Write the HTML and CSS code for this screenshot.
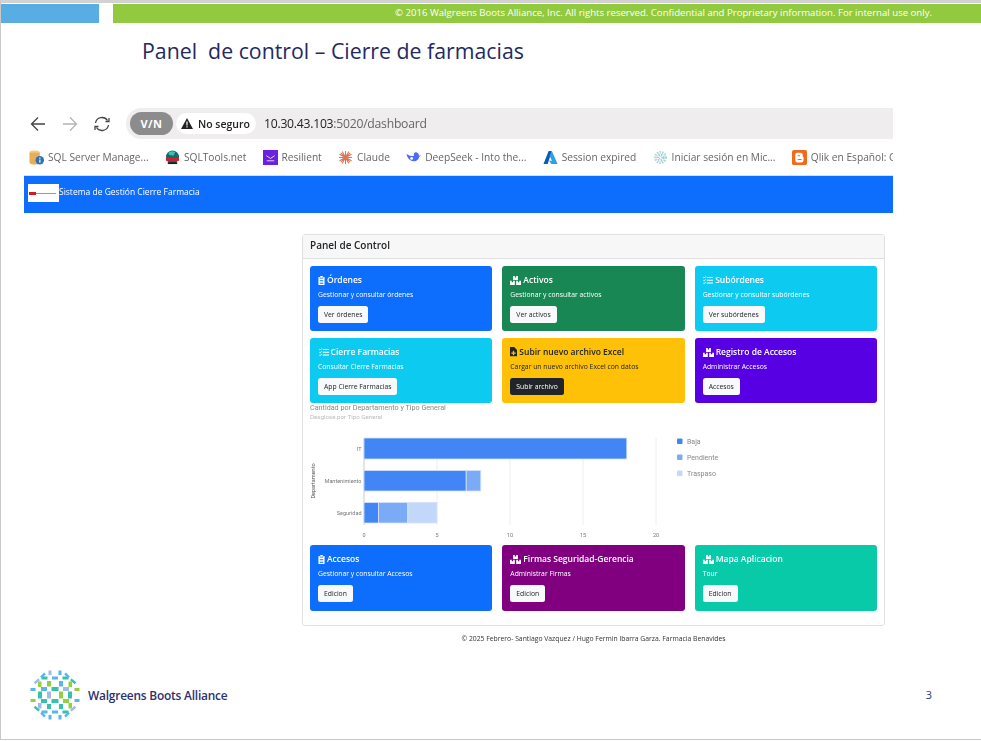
FILE: index.html

```html
<!DOCTYPE html>
<html lang="es">
<head>
  <meta charset="UTF-8">
  <title>Panel de control – Cierre de farmacias</title>
  <link rel="stylesheet" href="styles.css">
</head>
<body>
  <svg class="defs" width="0" height="0">
    <symbol id="i-clip" viewBox="0 0 16 16" preserveAspectRatio="none">
      <path fill-rule="evenodd" d="M5 0h6v3H5zM1 1.700h3V4.500h8V1.700h3V16H1zM4 7v1.300h8V7zM4 10v1.300h8V10zM4 13v1.300h8V13z"/>
    </symbol>
    <symbol id="i-boxes" viewBox="0 0 16 16" preserveAspectRatio="none">
      <path fill-rule="evenodd" d="M4.500 0H7v2.500h2V0h2.500v7h-7zM0 8.500h2.500V11h2V8.500H7V16H0zM9 8.500h2.500V11h2V8.500H16V16H9z"/>
    </symbol>
    <symbol id="i-list" viewBox="0 0 16 16" preserveAspectRatio="none">
      <path d="M6 2h10v1.800H6zM6 7.100h10v1.800H6zM6 12.200h10v1.800H6z"/>
      <path d="M.5 2.500l1.300 1.500L4.500.8M.5 7.800l1.300 1.500 2.700-3M.5 13l1.300 1.500 2.700-3" fill="none" stroke="currentColor" stroke-width="1.500"/>
    </symbol>
    <symbol id="i-file" viewBox="0 0 16 16" preserveAspectRatio="none">
      <path fill-rule="evenodd" d="M0 0h9.500L16 5v11H0zM6.500 6.500v2.700H3v2.200h3.500v2.700h3v-2.700H13V9.200H9.500V6.500z"/>
    </symbol>
  </svg>

  <div class="slide">
    <div class="topbar">
      <div class="topbar-blue"></div>
      <div class="topbar-green">© 2016 Walgreens Boots Alliance, Inc. All rights reserved. Confidential and Proprietary information. For internal use only.</div>
    </div>

    <h1 class="slide-title">Panel&nbsp; de control – Cierre de farmacias</h1>

    <div class="browser">
      <div class="address-row">
        <svg class="nav-icon" viewBox="0 0 16 16"><path d="M15 8H1.500M8 1.500L1.500 8 8 14.500" fill="none" stroke="#444" stroke-width="1.300"/></svg>
        <svg class="nav-icon" viewBox="0 0 16 16"><path d="M1 8h13.500M8 1.500L14.500 8 8 14.500" fill="none" stroke="#b4b4b4" stroke-width="1.300"/></svg>
        <svg class="nav-icon" viewBox="0 0 16 16"><path d="M1.500 7A6.600 6.600 0 0 1 13.500 4.500M14.500 9A6.600 6.600 0 0 1 2.500 11.500" fill="none" stroke="#444" stroke-width="1.300"/><path d="M15 2v3.500h-3.500M1 14v-3.500h3.500" fill="none" stroke="#444" stroke-width="1.300"/></svg>
        <div class="omnibox">
          <span class="vpn">V/N</span>
          <span class="not-secure">
            <svg width="12" height="11" viewBox="0 0 12 11"><path fill-rule="evenodd" d="M6 0l6 11H0zM5.400 3.500v4h1.200v-4zM5.400 8.300v1.200h1.200V8.300z" fill="#222"/></svg>
            No seguro
          </span>
          <span class="url">10.30.43.103<span class="url-rest">:5020/dashboard</span></span>
        </div>
      </div>

      <div class="bookmarks">
        <span class="bookmark">
          <svg viewBox="0 0 16 16"><ellipse cx="6" cy="3" rx="5.500" ry="2.500" fill="#f2c879"/><path d="M.5 3v10c0 1.500 2.500 2.500 5.500 2.500s5.500-1 5.500-2.500V3z" fill="#e9ad5a"/><circle cx="11.500" cy="11" r="4.500" fill="#2f6fb5"/><path d="M11 10h1.200v3.500H11zM11 8h1.200v1.200H11z" fill="#fff"/></svg>
          SQL Server Manage...
        </span>
        <span class="bookmark">
          <svg viewBox="0 0 16 16"><circle cx="8" cy="7.500" r="7" fill="#0f6b6e"/><path d="M4 2.500a7 7 0 0 1 7-.5l-2 4-5-1z" fill="#3ec0b0"/><rect x="1" y="8.500" width="14" height="3" fill="#d21f2b"/><rect x="3" y="13" width="10" height="2" fill="#123"/></svg>
          SQLTools.net
        </span>
        <span class="bookmark">
          <svg viewBox="0 0 16 16"><rect width="16" height="16" fill="#6a22dc"/><path d="M3.500 6l4.500 3 4.500-3M4 11.500h8" fill="none" stroke="#e6d9ff" stroke-width="1"/></svg>
          Resilient
        </span>
        <span class="bookmark">
          <svg viewBox="0 0 16 16"><path d="M8 1v14M1 8h14M3 3l10 10M13 3L3 13M4.500 1.500l7 13M11.500 1.500l-7 13M1.500 4.500l13 7M14.500 4.500l-13 7" stroke="#d97757" stroke-width="1.100"/></svg>
          Claude
        </span>
        <span class="bookmark">
          <svg viewBox="0 0 16 16"><path d="M.5 4c1 5 4 8 8 8 3 0 5-2 5.500-4.500L16 5.500c-1 0-1.500.2-2 .5-.5-2-1.500-3-3-3.500C9 2 8 4 8.500 6 6 7 3 6 .5 4z" fill="#4d6bfe"/><circle cx="6" cy="9" r="1.500" fill="#fff"/></svg>
          DeepSeek - Into the...
        </span>
        <span class="bookmark">
          <svg viewBox="0 0 16 16"><path d="M6 1h3.500L5 15H.5z" fill="#0a5cb5"/><path d="M9.500 1L15.500 15H9l-2.500-3.500h3L7 6z" fill="#2aa0ea"/></svg>
          Session expired
        </span>
        <span class="bookmark">
          <svg viewBox="0 0 16 16"><circle cx="8" cy="8" r="5.500" fill="none" stroke="#a9dccd" stroke-width="3" stroke-dasharray="1.500 1.200"/><circle cx="8" cy="8" r="2.500" fill="none" stroke="#a9c8ea" stroke-width="3" stroke-dasharray="1.200 1"/></svg>
          Iniciar sesión en Mic...
        </span>
        <span class="bookmark">
          <svg viewBox="0 0 16 16"><rect width="16" height="16" rx="2" fill="#f26a1b"/><path fill-rule="evenodd" d="M5.500 3h3.500a2.500 2.500 0 0 1 2.500 2.500V7c0 .5.500.8.800.8v3a2.500 2.500 0 0 1-2.500 2.500H5.500A2.200 2.200 0 0 1 3.500 11V5.200A2.200 2.200 0 0 1 5.500 3zM6 5.500v1.200h2.500V5.500zM6 9.500v1.200h4.200V9.500z" fill="#fff"/></svg>
          Qlik en Español: G
        </span>
      </div>

      <nav class="app-nav">
        <span class="app-logo"><span class="app-logo-mark"></span><span class="app-logo-line"></span></span>
        <span>Sistema de Gestión Cierre Farmacia</span>
      </nav>

      <div class="panel">
        <div class="panel-header">Panel de Control</div>
        <div class="panel-body">
          <div class="card-grid">
            <div class="card bg-blue">
              <h5><svg class="card-icon icon-clip"><use href="#i-clip"/></svg>Órdenes</h5>
              <p>Gestionar y consultar órdenes</p>
              <a class="btn">Ver órdenes</a>
            </div>
            <div class="card bg-green">
              <h5><svg class="card-icon icon-boxes"><use href="#i-boxes"/></svg>Activos</h5>
              <p>Gestionar y consultar activos</p>
              <a class="btn">Ver activos</a>
            </div>
            <div class="card bg-cyan">
              <h5><svg class="card-icon icon-list"><use href="#i-list"/></svg>Subórdenes</h5>
              <p>Gestionar y consultar subórdenes</p>
              <a class="btn">Ver subórdenes</a>
            </div>
            <div class="card bg-cyan">
              <h5><svg class="card-icon icon-list"><use href="#i-list"/></svg>Cierre Farmacias</h5>
              <p>Consultar Cierre Farmacias</p>
              <a class="btn">App Cierre Farmacias</a>
            </div>
            <div class="card bg-yellow">
              <h5><svg class="card-icon icon-file"><use href="#i-file"/></svg>Subir nuevo archivo Excel</h5>
              <p>Cargar un nuevo archivo Excel con datos</p>
              <a class="btn btn-dark">Subir archivo</a>
            </div>
            <div class="card bg-violet">
              <h5><svg class="card-icon icon-boxes"><use href="#i-boxes"/></svg>Registro de Accesos</h5>
              <p>Administrar Accesos</p>
              <a class="btn">Accesos</a>
            </div>
          </div>

          <div class="chart">
            <div class="chart-title">Cantidad por Departamento y Tipo General</div>
            <div class="chart-sub">Desglose por Tipo General</div>
            <svg class="chart-svg" width="567" height="124" viewBox="0 0 567 124">
              <path d="M127 17V104M200 17V104M273 17V104M346 17V104" stroke="#eeeeee" stroke-width="1"/>
              <path d="M54 17V104" stroke="#dddddd" stroke-width="1.500"/>
              <g stroke="#d5e3fb" stroke-width="0.800">
                <rect class="baja" x="54" y="17" width="262.800" height="21"/>
                <rect class="baja" x="54" y="49.500" width="102.200" height="20.500"/>
                <rect class="pend" x="156.200" y="49.500" width="14.600" height="20.500"/>
                <rect class="baja" x="54" y="81.500" width="14.600" height="20.500"/>
                <rect class="pend" x="68.600" y="81.500" width="29.200" height="20.500"/>
                <rect class="tras" x="97.800" y="81.500" width="29.200" height="20.500"/>
              </g>
              <g class="axis-label" text-anchor="end">
                <text x="51.500" y="29.500">IT</text>
                <text x="51.500" y="62">Mantenimiento</text>
                <text x="51.500" y="94">Seguridad</text>
              </g>
              <g class="axis-label" text-anchor="middle">
                <text x="54" y="116">0</text>
                <text x="127" y="116">5</text>
                <text x="200" y="116">10</text>
                <text x="273" y="116">15</text>
                <text x="346" y="116">20</text>
              </g>
              <text class="axis-title" text-anchor="middle" transform="translate(5 60) rotate(-90)">Departamento</text>
              <rect class="baja" x="367" y="17.500" width="5.500" height="5.500" rx="1"/>
              <rect class="pend" x="367" y="33.500" width="5.500" height="5.500" rx="1"/>
              <rect class="tras" x="367" y="49.500" width="5.500" height="5.500" rx="1"/>
              <g class="legend-label">
                <text x="377" y="22.500">Baja</text>
                <text x="377" y="38.500">Pendiente</text>
                <text x="377" y="54.500">Traspaso</text>
              </g>
            </svg>
          </div>

          <div class="card-grid">
            <div class="card card-tall bg-blue">
              <h5><svg class="card-icon icon-clip"><use href="#i-clip"/></svg>Accesos</h5>
              <p>Gestionar y consultar Accesos</p>
              <a class="btn">Edicion</a>
            </div>
            <div class="card card-tall bg-purple">
              <h5><svg class="card-icon icon-boxes"><use href="#i-boxes"/></svg>Firmas Seguridad-Gerencia</h5>
              <p>Administrar Firmas</p>
              <a class="btn">Edicion</a>
            </div>
            <div class="card card-tall bg-teal">
              <h5><svg class="card-icon icon-boxes"><use href="#i-boxes"/></svg>Mapa Aplicacion</h5>
              <p>Tour</p>
              <a class="btn">Edicion</a>
            </div>
          </div>
        </div>
      </div>

      <div class="credits">© 2025 Febrero- Santiago Vazquez / Hugo Fermin Ibarra Garza. Farmacia Benavides</div>
    </div>

    <div class="slide-footer">
      <div class="wba">
        <svg class="wba-mark" width="52" height="52" viewBox="-26 -26 52 52">
          <g class="teal">
            <rect x="-3.500" y="-8" width="7" height="4"/><rect x="-3.500" y="4" width="7" height="4"/>
            <rect x="-17" y="-3.500" width="4" height="7"/><rect x="13" y="-3.500" width="4" height="7"/>
            <rect x="-13.500" y="-18.500" width="6" height="3"/><rect x="7.500" y="-18.500" width="6" height="3"/>
            <rect x="-14" y="4" width="6" height="4"/><rect x="4" y="9" width="4" height="5"/>
            <rect x="-8" y="9" width="4" height="5"/><rect x="7.500" y="15.500" width="6" height="3"/>
          </g>
          <g class="blue">
            <rect x="-3" y="-18.500" width="6" height="3"/><rect x="-3" y="15.500" width="6" height="3"/>
            <rect x="-24.500" y="-7" width="5" height="3"/><rect x="19.500" y="4" width="5" height="3"/>
            <rect x="-14" y="-8" width="6" height="4"/><rect x="4" y="-14" width="4" height="5.500"/>
            <rect x="3.500" y="-24.500" width="3" height="4.500"/><rect x="-6.500" y="20" width="3" height="4.500"/>
            <rect x="3.500" y="20" width="3" height="4.500"/><rect x="-13.500" y="15.500" width="6" height="3"/>
          </g>
          <g class="green">
            <rect x="4" y="-3.500" width="4" height="7"/><rect x="-8" y="-14" width="4" height="5.500"/>
            <rect x="-17" y="-13.500" width="3.500" height="5.500"/><rect x="13.500" y="-13.500" width="3.500" height="5.500"/>
            <rect x="19.500" y="-7" width="5" height="3"/><rect x="-24.500" y="4" width="5" height="3"/>
            <rect x="8" y="4" width="6" height="4"/><rect x="13.500" y="8" width="3.500" height="5.500"/>
          </g>
          <g class="lav">
            <rect x="-8" y="-3.500" width="4" height="7"/><rect x="8" y="-8" width="6" height="4"/>
            <rect x="-6.500" y="-24.500" width="3" height="4.500"/><rect x="-17" y="8" width="3.500" height="5.500"/>
            <rect x="-21" y="-15" width="6" height="2.500" transform="rotate(-40 -18 -13.500)"/>
            <rect x="15" y="12.500" width="6" height="2.500" transform="rotate(-40 18 13.500)"/>
          </g>
          <g class="blue">
            <rect x="-15" y="-21" width="5.500" height="2.500" transform="rotate(-45 -12 -20)"/>
            <rect x="9.500" y="18.500" width="5.500" height="2.500" transform="rotate(-45 12 20)"/>
            <rect x="9.500" y="-21" width="5.500" height="2.500" transform="rotate(45 12 -20)"/>
            <rect x="-15" y="18.500" width="5.500" height="2.500" transform="rotate(45 -12 20)"/>
          </g>
          <g class="teal">
            <rect x="15" y="-15" width="6" height="2.500" transform="rotate(40 18 -13.500)"/>
            <rect x="-21" y="12.500" width="6" height="2.500" transform="rotate(40 -18 13.500)"/>
          </g>
        </svg>
        <span class="wba-name">Walgreens Boots Alliance</span>
      </div>
      <span class="page-num">3</span>
    </div>
  </div>
</body>
</html>
```

FILE: styles.css

```css
* { box-sizing: border-box; }
html, body { margin: 0; background: #fff; }
body { font-family: "Open Sans", Arial, sans-serif; width: 981px; height: 741px; overflow: hidden; }
.defs { position: absolute; }

.slide { height: 740px; border-top: 3px solid #d2d2d2; border-left: 1px solid #c8c8c8; border-bottom: 1px solid #c8c8c8; display: flex; flex-direction: column; }

.topbar { display: flex; margin-top: 1px; height: 19px; }
.topbar-blue { width: 98px; background: #58aee3; }
.topbar-green { margin-left: 14px; flex: 1; background: #92ca3f; color: #fff; font-size: 9.6px; line-height: 17px; text-align: right; padding-right: 49px; white-space: nowrap; }

.slide-title { margin: 13px 0 0 141px; height: 30px; font-size: 21.3px; line-height: 30px; font-weight: 400; color: #1f2a63; }

.browser { margin: 42px 0 0 23px; width: 869px; filter: blur(0.3px); }

.address-row { height: 31px; display: flex; align-items: center; padding-left: 6px; gap: 16px; }
.nav-icon { width: 16px; height: 16px; flex: none; }
.omnibox { flex: 1; height: 31px; background: #efedee; border-radius: 15.5px 0 0 15.5px; display: flex; align-items: center; padding-left: 4px; }
.vpn { width: 43px; height: 23px; border-radius: 12px; background: #8c8c8c; color: #fff; font-weight: 700; font-size: 11px; letter-spacing: 0.5px; line-height: 23px; text-align: center; }
.not-secure { margin-left: 3px; width: 80px; height: 21px; border-radius: 11px; background: #fff; color: #222; font-weight: 600; font-size: 10.5px; display: flex; align-items: center; gap: 5px; padding-left: 5px; white-space: nowrap; }
.url { margin-left: 8px; font-size: 12.2px; letter-spacing: -0.25px; color: #222; }
.url-rest { color: #666; }

.bookmarks { height: 37px; display: flex; align-items: center; padding-left: 5px; gap: 16.3px; overflow: hidden; border-bottom: 1px solid #cfe0ee; white-space: nowrap; }
.bookmark { display: flex; align-items: center; gap: 4px; font-size: 10.2px; color: #666; flex: none; }
.bookmark svg { width: 15px; height: 15px; flex: none; }

.app-nav { height: 37px; background: #0d6efd; color: #fff; font-size: 8.5px; display: flex; align-items: flex-start; padding: 8px 0 0 4px; line-height: 15px; }
.app-logo { width: 31px; height: 18px; background: #fff; display: flex; align-items: center; padding-left: 1px; }
.app-logo-mark { width: 7px; height: 3px; background: #d01c1f; }
.app-logo-line { width: 20px; height: 1px; background: #999; }

.panel { margin: 21px 0 0 278px; width: 583px; height: 391.5px; border: 1px solid #e0e0e0; border-radius: 3px; }
.panel-header { height: 24px; background: #f7f7f7; border-bottom: 1px solid #dfdfdf; padding-left: 7px; font-size: 10px; font-weight: 600; line-height: 21px; color: #212529; }
.panel-body { padding: 7px 7px 0; }

.card-grid { display: grid; grid-template-columns: repeat(3, 1fr); gap: 7px 10px; }
.card { height: 65px; border-radius: 3px; padding: 8px; color: #fff; }
.card-tall { height: 65.5px; }
.card h5 { margin: 0; font-size: 8.5px; font-weight: 600; line-height: 12px; display: flex; align-items: center; white-space: nowrap; }
.card-icon { fill: currentColor; flex: none; margin-right: 2px; }
.icon-clip { width: 7px; height: 9px; }
.icon-boxes { width: 11px; height: 9px; }
.icon-list { width: 10px; height: 8.5px; margin-left: 0.5px; }
.icon-file { width: 7px; height: 9.5px; }
.card p { margin: 4px 0 6px; font-size: 6.8px; line-height: 10px; white-space: nowrap; }
.btn { display: block; width: fit-content; height: 17px; line-height: 17px; padding: 0 6px; border-radius: 2.5px; background: #f8f9fa; color: #212529; font-size: 6.8px; }
.btn-dark { background: #212529; color: #fff; }

.bg-blue { background: #0d6efd; }
.bg-green { background: #198754; }
.bg-cyan { background: #0dcaf0; }
.bg-yellow { background: #ffc107; color: #212529; }
.bg-violet { background: #5800e4; }
.bg-purple { background: #800080; }
.bg-teal { background: #08c9a8; }

.chart { height: 142px; padding-top: 1px; font-family: Roboto, Arial, sans-serif; }
.chart-title { font-size: 7.2px; line-height: 7px; color: #888; }
.chart-sub { margin-top: 3px; font-size: 6.2px; line-height: 7px; color: #bbb; }
.chart-svg { display: block; }
.baja { fill: #4285f4; }
.pend { fill: #7baaf7; }
.tras { fill: #c3d7fb; }
.axis-label { font-size: 5.5px; fill: #777; }
.axis-title { font-size: 5.5px; fill: #555; }
.legend-label { font-size: 7px; fill: #888; }

.credits { margin: 8px 0 0 278px; width: 583px; text-align: center; font-size: 6.8px; line-height: 9px; color: #333; }

.slide-footer { margin-top: 26px; padding: 0 49px 0 28px; display: flex; justify-content: space-between; align-items: center; }
.wba { display: flex; align-items: center; gap: 7px; }
.wba-mark { display: block; }
.wba-mark .teal { fill: #35c2a8; }
.wba-mark .blue { fill: #5ab6ea; }
.wba-mark .green { fill: #93cf43; }
.wba-mark .lav { fill: #9fb9e8; }
.wba-name { font-size: 11.9px; font-weight: 600; color: #2a3270; letter-spacing: -0.2px; }
.page-num { font-size: 11.5px; color: #2a3a8c; }
```
